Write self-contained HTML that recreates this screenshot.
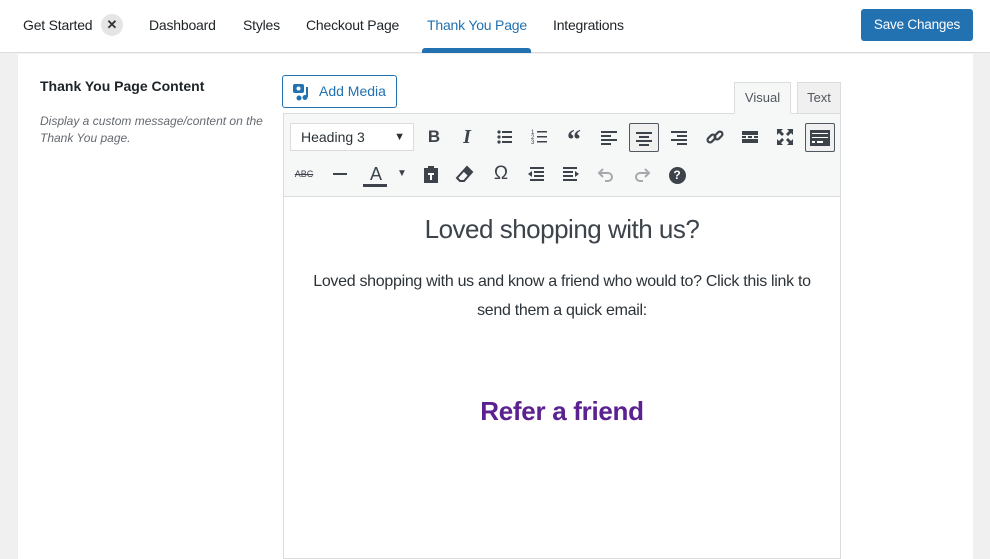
<!DOCTYPE html>
<html><head><style>
*{box-sizing:border-box;margin:0;padding:0}
body{width:990px;height:559px;overflow:hidden;background:#f0f0f1;font-family:"Liberation Sans",sans-serif;color:#1d2327;position:relative}
.top{position:absolute;left:0;top:0;width:990px;height:53px;background:#fff;border-bottom:1px solid #dcdcde}
.tab{position:absolute;top:17px;font-size:14px;color:#1d2327;letter-spacing:-0.2px}
.x{position:absolute;left:101px;top:14px;width:22px;height:22px;border-radius:50%;background:#e5e5e5;text-align:center;line-height:22px;font-size:13px;font-weight:bold;color:#333}
.act{color:#2271b1}
.ul{position:absolute;left:422px;top:48px;width:109px;height:5px;background:#2271b1;border-radius:3px 3px 0 0}
.save{position:absolute;left:861px;top:9px;width:112px;height:32px;background:#2271b1;color:#fff;border-radius:3px;font-size:13.5px;text-align:center;line-height:32px;letter-spacing:-0.2px}
.panel{position:absolute;left:18px;top:54px;width:955px;height:505px;background:#fff}
h4{position:absolute;left:40px;top:78px;font-size:14px;font-weight:bold}
.desc{position:absolute;left:40px;top:113px;font-size:12px;font-style:italic;color:#646970;line-height:17px;width:225px}
.am{position:absolute;left:282px;top:75px;width:115px;height:33px;border:1px solid #2271b1;border-radius:3px;color:#2271b1;font-size:14px;line-height:31px;padding-left:36px}
.vt{position:absolute;top:82px;height:32px;font-size:13px;color:#50575e;border:1px solid #dcdcde;text-align:center;line-height:30px}
.ed{position:absolute;left:283px;top:113px;width:558px;height:446px;border:1px solid #dcdcde;background:#fff}
.tb{height:83px;background:#f6f7f7;border-bottom:1px solid #dcdcde}
.sel{position:absolute;left:6px;top:9px;width:124px;height:28px;background:#fff;border:1px solid #dcdcde;font-size:14px;line-height:26px;padding-left:10px;color:#2c3338}
.ic{position:absolute;font-size:17px;color:#3c434a;text-align:center;width:28px;height:28px;line-height:28px}
.ic svg{position:absolute;left:4px;top:4px}
.on{border:1px solid #50575e;border-radius:2px;background:#f0f0f1}
.c{position:absolute;left:0;width:556px;text-align:center}
</style></head><body>
<div class="top">
<div class="tab" style="left:23px">Get Started</div><div class="x">✕</div>
<div class="tab" style="left:149px">Dashboard</div>
<div class="tab" style="left:243px">Styles</div>
<div class="tab" style="left:306px">Checkout Page</div>
<div class="tab act" style="left:427px">Thank You Page</div>
<div class="tab" style="left:553px">Integrations</div>
<div class="ul"></div>
<div class="save">Save Changes</div>
</div>
<div class="panel"></div>
<h4>Thank You Page Content</h4>
<div class="desc">Display a custom message/content on the Thank You page.</div>
<div class="am"><svg style="position:absolute;left:9px;top:7px" width="20" height="18" viewBox="0 0 20 18"><rect x="1" y="1" width="11" height="9" rx="2" fill="#2271b1"/><circle cx="6.5" cy="5.5" r="2" fill="#fff"/><path d="M15 4v10" stroke="#2271b1" stroke-width="2"/><circle cx="13" cy="14.5" r="2.5" fill="#2271b1"/><circle cx="7" cy="15" r="2.5" fill="#2271b1"/></svg>Add Media</div>
<div class="vt" style="left:734px;width:57px;background:#f6f7f7;border-bottom-color:#f6f7f7;z-index:2">Visual</div>
<div class="vt" style="left:797px;width:44px;background:#f0f0f1">Text</div>
<div class="ed"><div class="tb" style="position:relative">
<div class="sel">Heading 3<span style="position:absolute;right:8px;font-size:11px">▼</span></div>
<div class="ic" style="left:136px;top:9px;font-weight:bold">B</div>
<div class="ic" style="left:169px;top:9px;font-style:italic;font-family:'Liberation Serif';font-size:20px;font-weight:bold">I</div>
<div class="ic" style="left:207px;top:9px"><svg width="20" height="20"><g fill="#3c434a"><circle cx="4" cy="5" r="1.6"/><circle cx="4" cy="10" r="1.6"/><circle cx="4" cy="15" r="1.6"/><rect x="7" y="4" width="10" height="2"/><rect x="7" y="9" width="10" height="2"/><rect x="7" y="14" width="10" height="2"/></g></svg></div>
<div class="ic" style="left:242px;top:9px"><svg width="20" height="20"><g fill="#3c434a"><text x="1" y="7" font-size="6">1</text><text x="1" y="12" font-size="6">2</text><text x="1" y="17" font-size="6">3</text><rect x="7" y="4" width="10" height="1.5"/><rect x="7" y="9" width="10" height="1.5"/><rect x="7" y="14" width="10" height="1.5"/></g></svg></div>
<div class="ic" style="left:276px;top:9px;font-weight:bold;font-size:28px;font-family:'Liberation Serif';line-height:36px">“</div>
<div class="ic" style="left:311px;top:9px"><svg width="20" height="20"><g fill="#3c434a"><rect x="2" y="4" width="16" height="2"/><rect x="2" y="8" width="10" height="2"/><rect x="2" y="12" width="16" height="2"/><rect x="2" y="16" width="10" height="2"/></g></svg></div>
<div class="ic on" style="left:345px;top:9px;width:30px;height:29px"><svg width="20" height="20"><g fill="#3c434a"><rect x="2" y="4" width="16" height="2"/><rect x="5" y="8" width="10" height="2"/><rect x="2" y="12" width="16" height="2"/><rect x="5" y="16" width="10" height="2"/></g></svg></div>
<div class="ic" style="left:381px;top:9px"><svg width="20" height="20"><g fill="#3c434a"><rect x="2" y="4" width="16" height="2"/><rect x="8" y="8" width="10" height="2"/><rect x="2" y="12" width="16" height="2"/><rect x="8" y="16" width="10" height="2"/></g></svg></div>
<div class="ic" style="left:417px;top:9px"><svg width="20" height="20"><g fill="none" stroke="#3c434a" stroke-width="2.2"><rect x="2" y="9" width="9" height="5" rx="2.5" transform="rotate(-45 6.5 11.5)"/><rect x="9" y="6" width="9" height="5" rx="2.5" transform="rotate(-45 13.5 8.5)"/></g></svg></div>
<div class="ic" style="left:452px;top:9px"><svg width="20" height="20"><g fill="#3c434a"><rect x="2" y="4" width="16" height="4"/><rect x="2" y="9" width="4" height="2"/><rect x="8" y="9" width="4" height="2"/><rect x="14" y="9" width="4" height="2"/><rect x="2" y="12" width="16" height="4"/></g></svg></div>
<div class="ic" style="left:487px;top:9px"><svg width="20" height="20"><g fill="#3c434a"><path d="M2 2h6l-2 2 3 3-2 2-3-3-2 2zM18 2v6l-2-2-3 3-2-2 3-3-2-2zM2 18v-6l2 2 3-3 2 2-3 3 2 2zM18 18h-6l2-2-3-3 2-2 3 3 2-2z"/></g></svg></div>
<div class="ic on" style="left:521px;top:9px;width:30px;height:29px"><svg width="22" height="20" style="left:3px"><g fill="#3c434a"><rect x="1" y="2" width="20" height="16"/></g><g fill="#fff"><rect x="3" y="5" width="16" height="1"/><rect x="3" y="9" width="16" height="1"/><rect x="3" y="13" width="3" height="2"/><rect x="8" y="13" width="6" height="2"/></g></svg></div>
<div class="ic" style="left:6px;top:46px;font-size:9px;text-decoration:line-through">ABC</div>
<div class="ic" style="left:42px;top:46px"><svg width="20" height="20"><rect x="3" y="9" width="14" height="2" fill="#3c434a"/></svg></div>
<div class="ic" style="left:78px;top:46px;font-size:18px">A<span style="position:absolute;left:1px;top:24px;width:24px;height:3px;background:#3c434a"></span></div>
<div class="ic" style="left:104px;top:46px;font-size:10px">▼</div>
<div class="ic" style="left:133px;top:46px"><svg width="20" height="20"><path d="M3 4h4v-2h6v2h4v15h-14z" fill="#3c434a"/><path d="M7 9h6v2h-2v5h-2v-5h-2z" fill="#fff"/></svg></div>
<div class="ic" style="left:167px;top:46px"><svg width="20" height="20"><path d="M12 3l5 5-8 9h-4l-3-3z" fill="none" stroke="#3c434a" stroke-width="2"/><path d="M12 3l5 5-4 4-5-5z" fill="#3c434a"/></svg></div>
<div class="ic" style="left:203px;top:46px;font-size:19px">Ω</div>
<div class="ic" style="left:238px;top:46px"><svg width="20" height="20"><g fill="#3c434a"><rect x="4" y="3" width="14" height="2"/><rect x="8" y="7" width="10" height="2"/><rect x="8" y="11" width="10" height="2"/><rect x="4" y="15" width="14" height="2"/><path d="M2 10l4-3v6z"/></g></svg></div>
<div class="ic" style="left:273px;top:46px"><svg width="20" height="20"><g fill="#3c434a"><rect x="2" y="3" width="14" height="2"/><rect x="2" y="7" width="10" height="2"/><rect x="2" y="11" width="10" height="2"/><rect x="2" y="15" width="14" height="2"/><path d="M18 10l-4-3v6z"/></g></svg></div>
<div class="ic" style="left:308px;top:46px"><svg width="20" height="20"><path d="M7 5l-4 4 4 4M3 9h9a4 4 0 010 8h-3" fill="none" stroke="#a7aaad" stroke-width="2"/></svg></div>
<div class="ic" style="left:344px;top:46px"><svg width="20" height="20"><path d="M13 5l4 4-4 4M17 9h-9a4 4 0 000 8h3" fill="none" stroke="#a7aaad" stroke-width="2"/></svg></div>
<div class="ic" style="left:379px;top:46px"><span style="display:inline-block;width:17px;height:17px;border-radius:50%;background:#3c434a;color:#fff;font-size:12px;line-height:17px;font-weight:bold">?</span></div>
</div>
<div class="c" style="top:100px;font-size:26px;color:#3c434a;letter-spacing:-0.5px">Loved shopping with us?</div>
<div class="c" style="top:153px;font-size:16px;line-height:29px;padding:0 14px;color:#2c3338;letter-spacing:-0.3px">Loved shopping with us and know a friend who would to? Click this link to send them a quick email:</div>
<div class="c" style="top:282px;font-size:26px;font-weight:bold;color:#5b2190;letter-spacing:-0.3px">Refer a friend</div>
</div>
</body></html>
